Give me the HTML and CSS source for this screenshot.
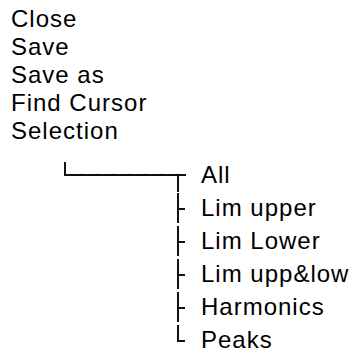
FILE: index.html
```html
<!DOCTYPE html>
<html>
<head>
<meta charset="utf-8">
<link rel="stylesheet" href="styles.css">
</head>
<body>
<div class="menu">
  <div class="item">Close</div>
  <div class="item">Save</div>
  <div class="item">Save as</div>
  <div class="item">Find Cursor</div>
  <div class="item">Selection</div>
</div>
<div class="tree">
  <div class="row">
    <div class="conn">
      <div class="elbow"></div>
      <div class="tee"></div>
    </div>
    <div class="label">All</div>
  </div>
  <div class="row">
    <div class="conn"><div class="branch"><div class="tick"></div></div></div>
    <div class="label">Lim upper</div>
  </div>
  <div class="row">
    <div class="conn"><div class="branch"><div class="tick"></div></div></div>
    <div class="label">Lim Lower</div>
  </div>
  <div class="row">
    <div class="conn"><div class="branch"><div class="tick"></div></div></div>
    <div class="label">Lim upp&amp;low</div>
  </div>
  <div class="row">
    <div class="conn"><div class="branch"><div class="tick"></div></div></div>
    <div class="label">Harmonics</div>
  </div>
  <div class="row">
    <div class="conn"><div class="last"></div></div>
    <div class="label">Peaks</div>
  </div>
</div>
</body>
</html>
```

FILE: styles.css
```css
html, body {
  margin: 0;
  background: #fff;
}
body {
  padding: 5px 0 0 11px;
  font-family: "Liberation Sans", Arial, sans-serif;
  font-size: 24px;
  letter-spacing: 1px;
  color: #000;
  overflow: hidden;
}
.menu .item {
  line-height: 28px;
  height: 28px;
  white-space: nowrap;
}
.tree {
  margin-top: 13px;
  margin-left: 53px;
}
.row {
  display: flex;
  height: 33px;
}
.conn {
  display: flex;
  width: 137px;
  flex: none;
  padding-left: 113px;
  box-sizing: border-box;
}
.row:first-child .conn {
  padding-left: 0;
}
.elbow {
  margin-top: 4px;
  width: 120px;
  height: 12px;
  border-left: 2px solid #111;
  border-bottom: 2px solid #111;
  background-image: repeating-linear-gradient(to right, transparent 0 15px, #bbb 15px 16px);
  background-size: 100% 1px;
  background-position: 0 100%;
  background-repeat: no-repeat;
  flex: none;
}
.tee {
  margin-top: 16px;
  margin-left: -9px;
  width: 0;
  height: 18px;
  border-left: 2px solid #111;
  flex: none;
}
.branch {
  margin-top: 2px;
  height: 30px;
  border-left: 2px solid #111;
  flex: none;
}
.tick {
  margin-top: 15px;
  width: 6px;
  height: 2px;
  background: #111;
}
.last {
  margin-top: 2px;
  width: 6px;
  height: 15px;
  border-left: 2px solid #111;
  border-bottom: 2px solid #111;
  flex: none;
}
.label {
  line-height: 33px;
  white-space: nowrap;
}
```
